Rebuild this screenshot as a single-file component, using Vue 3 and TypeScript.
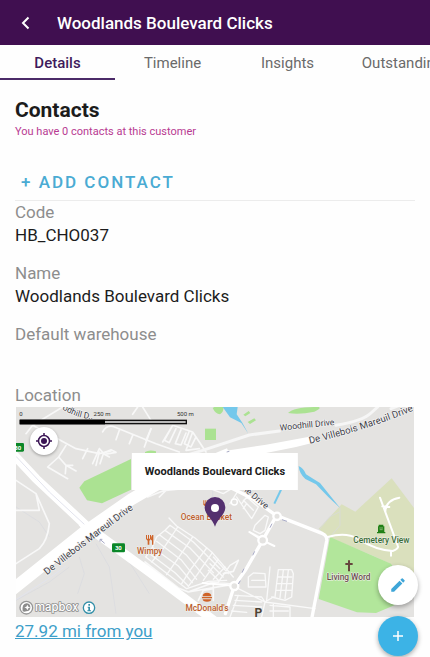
<script setup lang="ts">
import { ref } from 'vue'

interface Field {
  label: string
  value: string
}

const customer = 'Woodlands Boulevard Clicks'
const tabs: string[] = ['Details', 'Timeline', 'Insights', 'Outstanding']
const activeTab = ref<string>('Details')

const fields: Field[] = [
  { label: 'Code', value: 'HB_CHO037' },
  { label: 'Name', value: customer },
  { label: 'Default warehouse', value: '' },
]
</script>

<template>
  <div class="screen">
    <header class="app-bar">
      <button class="back" type="button" aria-label="Back">
        <svg viewBox="0 0 16 16" width="16" height="16"><path d="M10.500 2.500 5 8l5.500 5.500" fill="none" stroke="currentColor" stroke-width="2" /></svg>
      </button>
      <h1>{{ customer }}</h1>
    </header>

    <nav class="tabs">
      <button
        v-for="tab in tabs"
        :key="tab"
        type="button"
        class="tab"
        :class="{ active: tab === activeTab }"
        @click="activeTab = tab"
      >
        {{ tab }}
      </button>
    </nav>

    <main class="content">
      <h2>Contacts</h2>
      <p class="note">You have 0 contacts at this customer</p>
      <button class="add" type="button">+ ADD CONTACT</button>

      <dl class="fields">
        <div v-for="field in fields" :key="field.label" class="field">
          <dt>{{ field.label }}</dt>
          <dd>{{ field.value }}</dd>
        </div>
      </dl>

      <h3>Location</h3>
      <div class="map">
        <svg class="tiles" viewBox="0 20 1194 631" preserveAspectRatio="xMidYMid slice">
          <rect y="0" width="1194" height="660" fill="#e4e3e1" />

          <!-- parks and water -->
          <g fill="#abe292">
            <path d="M190 262 205 243 345 176V268L258 309 213 300Z" />
            <path d="M387 155Q400 147 420 153V160H387Z" />
            <path d="M567 85H600V119H567Z" />
            <path d="M590 23Q600 15 622 20 624 35 612 42 598 40 590 23Z" />
            <path d="M816 38Q835 19 908 20 918 24 895 34 850 44 816 38ZM682 43 698 32 703 38 688 48ZM695 65 715 54 720 60 702 71Z" />
          </g>
          <path d="M908 385 977 312 1018 334 1127 234 1194 323V525L1080 470 938 410Z" fill="#dae0bd" />
          <path d="M942 410 1125 490 1194 590 1080 638 1023 636 908 596Z" fill="#b2e69b" />
          <path d="M620 20H665L662 42 679 67 697 100 676 68 642 51Z" fill="#74c8eb" />
          <path d="M848 197Q862 202 870 222 890 235 912 248L973 324Q935 290 900 252L868 236Q850 220 848 197Z" fill="#74c8eb" />
          <path d="M796 266 775 310" fill="none" stroke="#74c8eb" stroke-width="6" />

          <!-- faint footpaths -->
          <g fill="none" stroke="#d8d9df" stroke-width="2">
            <path d="M0 320 70 365 100 410M190 470 205 520 185 580M240 430 280 500 300 640M590 180V300M330 470 400 580" />
            <path d="M972 320V375L942 410M910 388 940 350 970 335M0 600 100 545 160 500" />
          </g>

          <!-- residential streets -->
          <g fill="none" stroke="#f8f8f8" stroke-width="5" stroke-linecap="round" stroke-linejoin="round">
            <path d="M30 100 50 75 180 145 250 160 285 152M150 135 128 170 95 200 155 235M128 170 150 195 170 195M150 195 148 220M150 195 180 212M50 75 140 20" />
            <path d="M250 145 262 158 285 148 300 156 265 162 280 170M250 145 230 190M215 145 200 175M250 155 240 195M262 160 252 190" />
            <path d="M260 95Q270 75 290 78L420 130 490 155M310 90 300 118M350 105 340 130M405 85 385 140M405 60 380 20M350 42 365 20M0 240 60 280 100 370Q95 420 70 445L0 490M0 330 70 330 60 280" />
            <path d="M440 125 470 75 530 95 560 140 570 155M470 75 445 120 460 127 480 85M495 88 478 130 495 134 510 98M520 92 505 130 525 140 540 110M530 95 510 150 550 145M390 120 405 85" />
            <path d="M430 290 450 270 500 265M395 290 450 268" />
          </g>

          <!-- shopping centre and parking -->
          <g transform="translate(387 315)" fill="none" stroke="#f9f9f9" stroke-width="4" stroke-linejoin="round" stroke-linecap="round">
            <path d="M72 38 95 62 150 98 200 140 265 215M75 60 60 75 35 95 20 130 2 155 88 222 125 250 190 228 245 225M75 60 145 110 225 190M60 75 135 128 205 202M45 90 125 150 178 213M35 108 110 165 155 222M25 128 100 182 142 232M18 148 90 202 130 242" />
            <path d="M98 65 55 130 20 170M143 95 95 165 65 208M185 128 135 195 110 235M202 142 155 210 130 243M220 162 175 225M240 185 205 222" />
            <path d="M0 170 100 248 130 260 245 240M135 258 205 232 205 285M235 205 265 198 280 165M205 250 175 255 160 285" stroke-width="5" />
          </g>
          <g transform="translate(582 0)" fill="none" stroke="#f9f9f9" stroke-width="4" stroke-linejoin="round" stroke-linecap="round">
            <path d="M0 265 40 280 60 268M80 290 100 320 125 355 145 320 110 290 95 310M100 300 130 330M110 310 100 325M135 375 165 345 175 350 165 390 150 400 130 390ZM120 395 150 410M85 270 60 310" />
            <path d="M0 545 60 550M25 545 60 495 85 480M10 470 55 520M0 490 40 530M-5 510 25 540" />
            <path d="M180 500 170 600M205 508 245 508 250 520 245 590 225 600 185 590M205 508 195 590M220 510 210 592M235 510 225 595M205 530H245M200 550H245M200 570H245M115 530 130 518 165 520 168 560 115 560ZM125 540H165" />
            <path d="M85 565 165 605 315 625M85 585 60 650M75 585 155 590 165 605 155 650M75 600 155 605M70 615 155 620M65 632 110 636M180 615 240 620V650M180 632H235M190 610V650M165 605 190 590" />
          </g>

          <!-- secondary roads -->
          <g fill="none" stroke="#f6f6f6" stroke-width="9" stroke-linecap="round" stroke-linejoin="round">
            <path d="M500 168 560 150 700 104 790 92M960 75Q1040 62 1065 38L1085 20M1125 25 1150 15" />
          </g>
          <g fill="none" stroke="#fff" stroke-linejoin="round" stroke-linecap="round">
            <path d="M640 260 710 295 780 345 920 400Q934 406 932 422L888 651" stroke-width="10" />
            <path d="M780 348 740 420 688 510 655 556 628 640" stroke-width="10" />
            <path d="M700 395 740 420 775 437M655 556 560 548" stroke-width="6" />
            <path d="M935 410Q990 395 1025 415 1080 450 1130 452 1150 445 1145 435L1092 292M1108 335Q1108 300 1150 292M1099 318 1120 320M1125 452V466" stroke-width="6" />
          </g>
          <g fill="#e4e3e1" stroke="#fff" stroke-width="7">
            <circle cx="783" cy="348" r="11" />
            <circle cx="740" cy="420" r="13" />
            <circle cx="655" cy="557" r="12" />
            <circle cx="655" cy="305" r="9" stroke-width="4" />
          </g>

          <!-- main roads -->
          <path d="M-20 575 205 395 345 298 430 248 640 160" fill="none" stroke="#fff" stroke-width="36" />
          <path d="M590 180 620 153 750 133 880 109 900 125 840 140 750 158Z" fill="#fff" />
          <path d="M-10 160 60 235 215 380 400 515 600 665" fill="none" stroke="#fff" stroke-width="27" />
          <path d="M0 168 100 275 205 372M0 598 90 540 150 497" fill="none" stroke="#e2e3ed" stroke-width="3" />
          <path d="M190 372 203 387 195 402M210 365 230 373 248 366" fill="none" stroke="#fff" stroke-width="6" />
          <g fill="none" stroke="#a8aac6" stroke-width="3">
            <path d="M252 417 266 429M252 417V424M252 417H259M762 382 768 370M710 465 716 453M678 517 684 505M667 551 673 541M798 358 813 363M632 155 640 153" />
          </g>

          <!-- street names -->
          <defs>
            <path id="street-west" d="M93 525Q240 408 380 306" />
            <path id="street-east" d="M881 130Q1040 94 1220 20" />
            <path id="street-north" d="M138 26Q190 60 250 56" />
          </defs>
          <g class="street">
            <text><textPath href="#street-west">De Villebois Mareuil Drive</textPath></text>
            <text><textPath href="#street-east">De Villebois Mareuil Drive</textPath></text>
            <text class="minor" transform="translate(792 91) rotate(-6)">Woodhill Drive</text>
            <text class="minor"><textPath href="#street-north">odhill D..</textPath></text>
            <text class="minor" transform="translate(684 272) rotate(40)">le Drive</text>
          </g>

          <!-- route shields -->
          <g>
            <rect x="-14" y="128" width="38" height="26" rx="4" fill="#0b8728" />
            <rect x="288" y="429" width="39" height="27" rx="4" fill="#0b8728" />
            <g class="shield"><text x="5" y="149">30</text><text x="307" y="450">30</text></g>
          </g>

          <!-- places -->
          <g fill="#cf6429">
            <path d="M390 404H393V415H396V404H399V415H402V404H400 405V416L400 421V433H395V421L390 416ZM409 404Q403 410 405 420H408V433H412V404Z" />
            <path d="M562 300H565V310H568V300H571V310H574V300H577V313L572 318V330H567V318L562 313Z" />
            <path d="M560 588Q560 577 573 577 586 577 586 588ZM558 590H588V594H558ZM560 597H586Q586 604 573 604 560 604 560 597Z" />
          </g>
          <path d="M1088 373H1102V378H1105V395H1108V399H1083V395H1086V378H1088Z" fill="#218016" />
          <path d="M1090 383H1101M1091 388H1100" stroke="#b5cfa0" stroke-width="2" />
          <path d="M996 480H1002V488H1010V494H1002V513H996V494H988V488H996Z" fill="#66463e" />
          <g class="place">
            <text class="food" x="571" y="358">Ocean Basket</text>
            <text class="food" x="401" y="461">Wimpy</text>
            <text class="food" x="573" y="633">McDonald's</text>
            <text class="green" x="1096" y="427">Cemetery View</text>
            <text class="faith" x="998" y="540">Living Word</text>
            <text class="parking" x="727" y="651">P</text>
          </g>

          <!-- scale bar -->
          <rect x="13" y="60" width="498" height="10" fill="#b9b9b9" stroke="#111" stroke-width="4" />
          <rect x="11" y="58" width="256" height="14" fill="#000" />
          <g class="scale"><text x="15" y="46">0</text><text x="258" y="46">250 m</text><text x="508" y="46">500 m</text></g>

          <!-- marker -->
          <path d="M597 379C590 355 566 343 566 321A31 31 0 0 1 628 321C628 343 604 355 597 379Z" fill="#54306f" />
          <circle cx="597" cy="323" r="12" fill="#fff" />

          <!-- attribution -->
          <circle cx="31" cy="622" r="19" fill="#fff" stroke="#979797" stroke-width="4" />
          <path d="M20 633Q17 611 31 609A12 12 0 1 1 31 633Q25 635 20 633Z" fill="#8c8c8c" />
          <path d="M34 613 37 619 43 621 37 624 34 630 31 624 25 621 31 619Z" fill="#fff" />
          <text class="brand" x="57" y="632">mapbox</text>
          <circle cx="219" cy="622" r="17" fill="#fff" stroke="#338fa8" stroke-width="4" />
          <path d="M217 611H222V616H217ZM215 619H222V630H225V633H214V630H217V622H215Z" fill="#338fa8" />
        </svg>

        <button class="locate" type="button" aria-label="My location">
          <svg viewBox="0 0 16 16" width="16" height="16">
            <g fill="none" stroke="currentColor" stroke-width="1.500">
              <circle cx="8" cy="8" r="5.500" />
              <path d="M8 0v3M8 13v3M0 8h3M13 8h3" />
            </g>
            <circle cx="8" cy="8" r="3" fill="currentColor" />
          </svg>
        </button>
        <div class="callout">{{ customer }}</div>
      </div>
      <a class="distance" href="#">27.92 mi from you</a>
    </main>

    <div class="actions">
      <button class="fab edit" type="button" aria-label="Edit">
        <svg viewBox="0 0 24 24" width="18" height="18"><path d="M3 17.250V21h3.750L17.810 9.940l-3.750-3.750zM20.710 7.040a1 1 0 0 0 0-1.410l-2.340-2.340a1 1 0 0 0-1.410 0l-1.830 1.830 3.750 3.750z" fill="currentColor" /></svg>
      </button>
      <button class="fab create" type="button" aria-label="Add">
        <svg viewBox="0 0 12 12" width="12" height="12"><path d="M6 1v10M1 6h10" fill="none" stroke="currentColor" stroke-width="1.500" /></svg>
      </button>
    </div>
  </div>
</template>

<style>
body {
  margin: 0;
  background: #fefefe;
}
</style>

<style scoped>
.screen {
  overflow: hidden;
  font-family: Roboto, 'Liberation Sans', sans-serif;
  color: #1c1c1c;
}
button {
  padding: 0;
  border: 0;
  background: none;
  font-family: inherit;
  cursor: pointer;
}
h1, h2, h3, p, dl, dd {
  margin: 0;
}
svg {
  display: block;
}
.app-bar {
  display: flex;
  align-items: center;
  gap: 23px;
  height: 45px;
  padding: 0 18px;
  background: #400f50;
  color: #fff;
}
.back {
  color: inherit;
}
h1 {
  font-size: 17px;
  font-weight: 500;
  line-height: 24px;
}
.tabs {
  display: flex;
  height: 35px;
}
.tab {
  flex: 0 0 115px;
  padding-top: 3px;
  border-bottom: 2px solid transparent;
  color: #6a6a6a;
  font-size: 15px;
  line-height: 30px;
}
.tab.active {
  border-color: #4b2a68;
  color: #401a5c;
  font-weight: 500;
}
.content {
  padding: 18px 15px 14px;
}
h2 {
  font-size: 21px;
  font-weight: 700;
  line-height: 25px;
}
.note {
  color: #b83a92;
  font-size: 11px;
  line-height: 17px;
}
.add {
  display: block;
  width: 100%;
  margin-top: 24px;
  padding-left: 6px;
  border-bottom: 1px solid #ececec;
  color: #4aabd3;
  font-size: 17px;
  font-weight: 500;
  line-height: 36px;
  letter-spacing: 2px;
  text-align: left;
}
.field {
  height: 61px;
}
dt, dd, h3 {
  font-size: 17px;
  font-weight: 400;
  line-height: 23px;
}
dt, h3 {
  color: #8d8d8d;
}
.map {
  position: relative;
  margin: 0 1px;
}
.tiles {
  width: 100%;
}
.tiles text {
  font-family: Roboto, 'Liberation Sans', sans-serif;
  paint-order: stroke;
  stroke-linejoin: round;
}
.street text {
  fill: #42424a;
  stroke: #f4f4f4;
  stroke-width: 4px;
  font-size: 29px;
}
.street .minor {
  font-size: 26px;
}
.shield text {
  fill: #fff;
  font-size: 18px;
  font-weight: 700;
  text-anchor: middle;
}
.place text {
  stroke: #f2f2ee;
  stroke-width: 3px;
  font-size: 25px;
  font-weight: 500;
  text-anchor: middle;
}
.place .food {
  fill: #bd5d2c;
}
.place .green {
  fill: #396d35;
}
.place .faith {
  fill: #68504c;
}
.place .parking {
  fill: #4d4436;
  font-size: 36px;
  font-weight: 700;
}
.scale text {
  fill: #333;
  font-size: 18px;
  text-anchor: middle;
}
.tiles .brand {
  fill: #fff;
  stroke: #8f8f8f;
  stroke-width: 5px;
  font-family: Inter, Roboto, sans-serif;
  font-size: 34px;
  font-weight: 500;
}
.locate {
  position: absolute;
  top: 20px;
  left: 14px;
  display: grid;
  place-items: center;
  width: 28px;
  height: 28px;
  border-radius: 50%;
  background: #fff;
  box-shadow: 0 1px 3px #0005;
  color: #3b1555;
}
.callout {
  position: absolute;
  top: 46px;
  left: 50%;
  padding: 0 13px;
  background: #fff;
  font-size: 11px;
  font-weight: 700;
  line-height: 37px;
  white-space: nowrap;
  transform: translateX(-50%);
}
.distance {
  display: inline-block;
  color: #3d9fc9;
  font-size: 17px;
  line-height: 28px;
}
.actions {
  position: fixed;
  right: 12px;
  bottom: 1px;
  display: grid;
  gap: 11px;
}
.fab {
  display: grid;
  place-items: center;
  width: 40px;
  height: 40px;
  border-radius: 50%;
  box-shadow: 0 2px 5px #0005;
}
.edit {
  background: #fff;
  color: #3fa6d8;
}
.create {
  background: #3cb3e6;
  color: #fff;
}
</style>
